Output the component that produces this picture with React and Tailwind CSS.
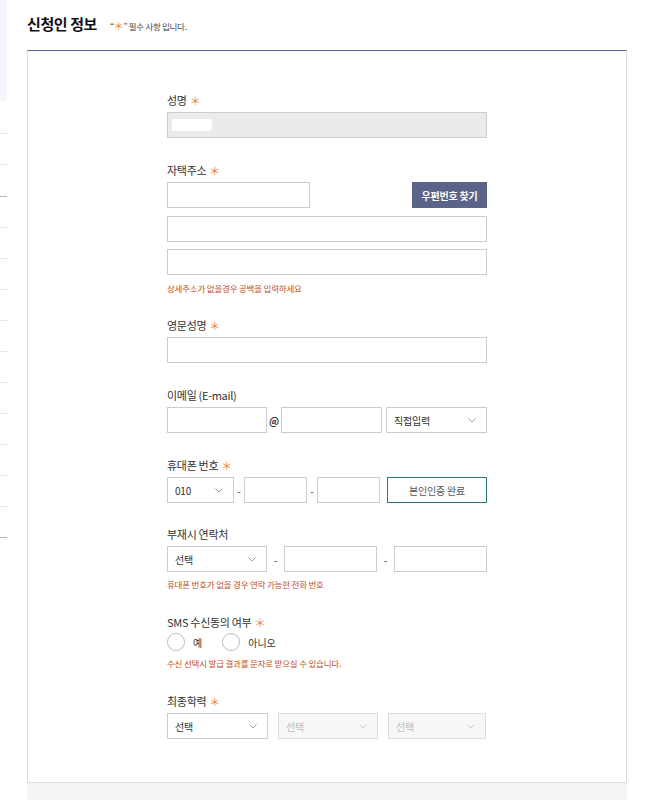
import React from 'react';

const font = { fontFamily: '"Noto Sans CJK KR", "Noto Sans", sans-serif' };

function Star() {
  return <span className="ml-[3px] text-[11px] leading-none text-[#e8823a]">＊</span>;
}

function Label({ children, required, className = '' }) {
  return (
    <p className={`flex h-[16px] items-center text-[11px] leading-[16px] tracking-[-0.3px] text-[#333] ${className}`}>
      {children}
      {required ? <Star /> : null}
    </p>
  );
}

function Input({ className = '' }) {
  return <div className={`h-[26px] border border-[#cccccc] bg-white ${className}`} />;
}

function Chevron({ color = '#999' }) {
  return (
    <svg width="8" height="5" viewBox="0 0 8 5" fill="none">
      <path d="M0.5 0.5 L4 4 L7.5 0.5" stroke={color} strokeWidth="0.9" />
    </svg>
  );
}

function Select({ text, className = '', disabled = false }) {
  return (
    <div
      className={`flex h-[26px] items-center justify-between border px-[7px] text-[10px] tracking-[-0.2px] ${
        disabled ? 'border-[#dddddd] bg-[#f7f7f7] text-[#bbbbbb]' : 'border-[#cccccc] bg-white text-[#333]'
      } ${className}`}
    >
      <span>{text}</span>
      <span className="pr-[3px]">
        <Chevron color={disabled ? '#c4c4c4' : '#999'} />
      </span>
    </div>
  );
}

function Helper({ children, className = '' }) {
  return (
    <p className={`h-[14px] text-[8.5px] leading-[14px] tracking-[-0.2px] text-[#c44e1c] ${className}`}>{children}</p>
  );
}

function Radio({ label }) {
  return (
    <div className="flex items-center">
      <span className="h-[18px] w-[18px] rounded-full border-[1.5px] border-[#bdbdbd] bg-white" />
      <span className="ml-[8px] text-[10px] text-[#333]">{label}</span>
    </div>
  );
}

function SideLines() {
  const lines = [133, 164, 196, 227, 258, 289, 320, 351, 382, 413, 444, 475, 506, 537];
  return (
    <div className="w-[7px] shrink-0">
      <div className="h-[101px] bg-[#f6f7fc]" />
      <div className="relative h-[460px]">
        {lines.map((y, i) => (
          <div
            key={y}
            className={`absolute left-0 h-px w-[7px] ${i === 2 || i === 13 ? 'bg-[#b5b5b5]' : 'bg-[#e6e6e6]'}`}
            style={{ top: y - 101 }}
          />
        ))}
      </div>
    </div>
  );
}

export default function App() {
  return (
    <div className="flex min-h-[800px] bg-white" style={font}>
      <SideLines />
      <div className="ml-[20px] w-[600px]">
        <div className="flex h-[50px] items-center pb-[1px]">
          <h2 className="text-[15px] font-bold tracking-[-0.4px] text-[#111]">신청인 정보</h2>
          <p className="ml-[13px] mt-[3px] flex items-center text-[8.5px] tracking-[-0.3px] text-[#444]">
            “<span className="text-[10px] leading-none text-[#e8823a]">＊</span>” 필수 사항 입니다.
          </p>
        </div>

        <div className="border-x border-b border-t border-x-[#dddddd] border-b-[#dddddd] border-t-[#56648f] bg-white pb-[43px] pl-[139px] pt-[41px]">
          <div className="w-[320px]">
            <Label required>성명</Label>
            <div className="mt-[4px] flex h-[26px] items-center border border-[#cccccc] bg-[#ebebeb] pl-[4px]">
              <div className="h-[12px] w-[40px] rounded-r-[4px] bg-white" />
            </div>

            <Label required className="mt-[24px]">자택주소</Label>
            <div className="mt-[4px] flex justify-between">
              <Input className="w-[143px]" />
              <button
                type="button"
                className="h-[26px] w-[75px] bg-[#5b6389] text-[10px] font-bold tracking-[-0.2px] text-white"
              >
                우편번호 찾기
              </button>
            </div>
            <Input className="mt-[8px]" />
            <Input className="mt-[7px]" />
            <Helper className="mt-[6px]">상세주소가 없을경우 공백을 입력하세요</Helper>

            <Label required className="mt-[22px]">영문성명</Label>
            <Input className="mt-[4px]" />

            <Label className="mt-[24px]">이메일 (E-mail)</Label>
            <div className="mt-[4px] flex items-center">
              <Input className="w-[100px]" />
              <span className="w-[14px] text-center text-[10px] font-bold text-[#333]">@</span>
              <Input className="w-[101px]" />
              <Select text="직접입력" className="ml-[4px] w-[101px]" />
            </div>

            <Label required className="mt-[24px]">휴대폰 번호</Label>
            <div className="mt-[4px] flex items-center">
              <Select text="010" className="w-[67px]" />
              <span className="w-[10px] text-center text-[10px] text-[#333]">-</span>
              <Input className="w-[63px]" />
              <span className="w-[10px] text-center text-[10px] text-[#333]">-</span>
              <Input className="w-[63px]" />
              <button
                type="button"
                className="ml-[7px] h-[26px] w-[100px] border border-[#2d7575] bg-white text-[10px] tracking-[-0.2px] text-[#555]"
              >
                본인인증 완료
              </button>
            </div>

            <Label className="mt-[23px]">부재시 연락처</Label>
            <div className="mt-[4px] flex items-center">
              <Select text="선택" className="w-[100px]" />
              <span className="w-[17px] text-center text-[10px] text-[#333]">-</span>
              <Input className="w-[93px]" />
              <span className="w-[17px] text-center text-[10px] text-[#333]">-</span>
              <Input className="w-[93px]" />
            </div>
            <Helper className="mt-[5px]">휴대폰 번호가 없을 경우 연락 가능한 전화 번호</Helper>

            <Label required className="mt-[23px]">SMS 수신동의 여부</Label>
            <div className="mt-[3px] flex h-[18px] items-center gap-[20px]">
              <Radio label="예" />
              <Radio label="아니오" />
            </div>
            <Helper className="mt-[5px]">수신 선택시 발급 결과를 문자로 받으실 수 있습니다.</Helper>

            <Label required className="mt-[23px]">최종학력</Label>
            <div className="mt-[4px] flex items-center gap-[10px]">
              <Select text="선택" className="w-[101px]" />
              <Select text="선택" disabled className="w-[100px]" />
              <Select text="선택" disabled className="w-[98px]" />
            </div>
          </div>
        </div>
        <div className="h-[20px] bg-[#f4f4f4]" />
      </div>
    </div>
  );
}
